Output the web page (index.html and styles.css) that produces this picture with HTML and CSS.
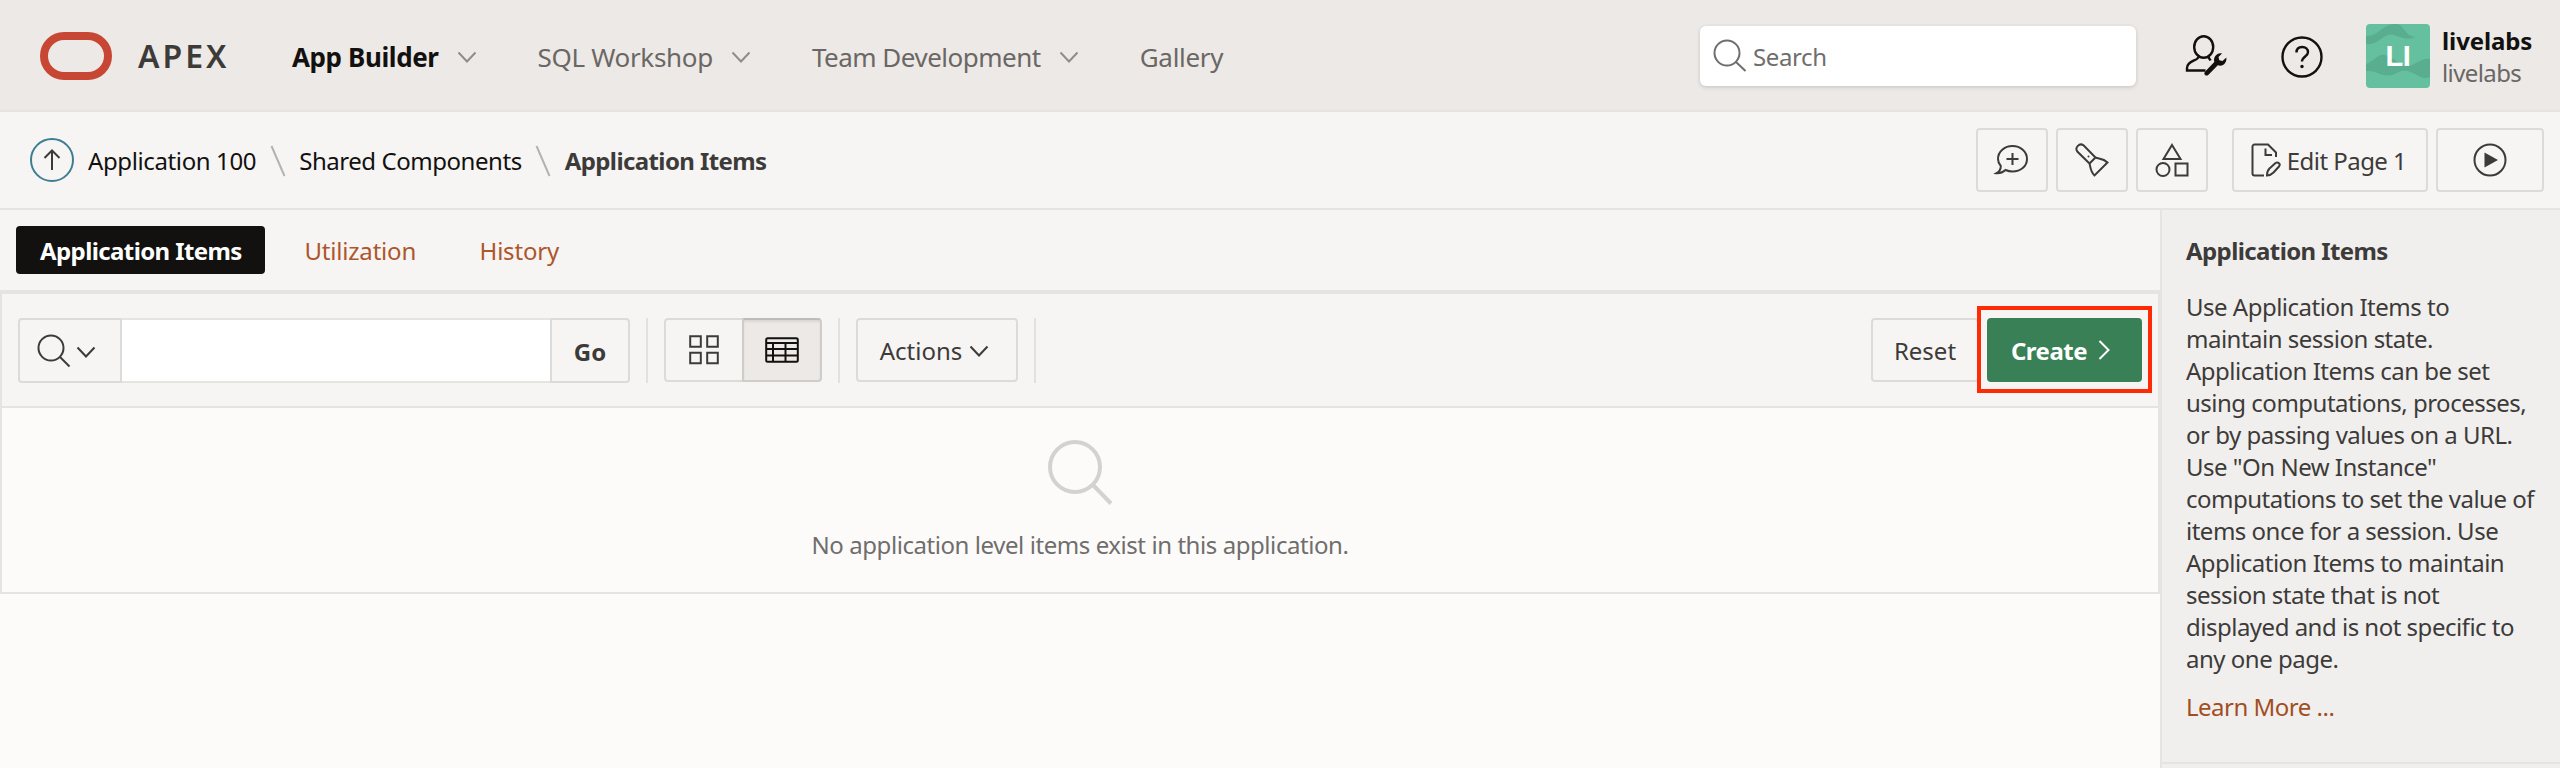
FILE: index.html
```html
<!DOCTYPE html>
<html lang="en">
<head>
<meta charset="utf-8">
<title>Application Items</title>
<link rel="stylesheet" href="styles.css">
</head>
<body>
<header class="header">
  <div class="logo"></div>
  <span class="brand">APEX</span>
  <nav class="nav">
    <a class="nav-item nav-item--active"><span class="t nav-bold">App Builder</span><svg class="chev" viewBox="0 0 20 12"><path d="M1.500 1.500 10 10.500 18.500 1.500"/></svg></a>
    <a class="nav-item"><span class="t nav-sql">SQL Workshop</span><svg class="chev" viewBox="0 0 20 12"><path d="M1.500 1.500 10 10.500 18.500 1.500"/></svg></a>
    <a class="nav-item"><span class="t nav-team">Team Development</span><svg class="chev" viewBox="0 0 20 12"><path d="M1.500 1.500 10 10.500 18.500 1.500"/></svg></a>
    <a class="nav-item"><span class="t nav-gal">Gallery</span></a>
  </nav>
  <div class="search">
    <svg class="search-icon" viewBox="0 0 34 34"><circle cx="14" cy="14" r="12.500"/><path d="M23 23 32.500 32"/></svg>
    <span class="t search-text">Search</span>
  </div>
  <svg class="admin-icon" viewBox="0 0 44 44"><ellipse cx="19.700" cy="13" rx="9.500" ry="10.800"/><path d="M14.300 22.500c.8 4.500-11.300 3.500-11.300 11.500v2.500h18.500M24.500 22.500c0 2 1.500 2.500 2 4"/><path class="solid" d="M38 19.500 34.500 23l.8 3.200 3.200.8 3.800-3.500c.8 4-2 8.200-6 8.200-1 0-1.800-.2-2.500-.5L24.500 40.700c-2.400 2.400-5.700-.7-3.300-3.200L30.300 28c-1.300-4.500 2.500-9.600 7.700-8.500z"/></svg>
  <svg class="help-icon" viewBox="0 0 42 42"><circle cx="21" cy="21" r="19.500"/><path d="M15.500 16.500c0-3.500 2.300-5.500 5.700-5.500s5.800 2 5.800 5.200c0 4.300-6 4.300-6 9.300"/><circle class="solid" cx="21" cy="30.500" r="1.700"/></svg>
  <div class="avatar">
    <svg class="avatar-bg" viewBox="0 0 64 64"><path d="M0 12C12 13 17-1 30 0c9 1 8 12 20 13-10 4-15 0-22-2C17 8 14 22 0 20zM0 40c8-3 12-11 19-9 12 3 15 14 27 10 8-4 12-7 18-6v18c-7 3-11-1-17-4-9-4-11-3-18 1-12 5-17-4-29-3z"/></svg>
    <span class="avatar-text">LI</span>
  </div>
  <div class="user"><span class="user-name">livelabs</span><span class="user-ws">livelabs</span></div>
</header>

<div class="crumbs">
  <a class="up"><svg class="up-icon" viewBox="0 0 18 22"><path d="M9 21V2M1.500 9 9 1.500 16.500 9"/></svg></a>
  <a class="t crumb-app">Application 100</a>
  <svg class="slash" viewBox="0 0 16 32"><path d="M1.500 1 14.500 31"/></svg>
  <a class="t crumb-shared">Shared Components</a>
  <svg class="slash" viewBox="0 0 16 32"><path d="M1.500 1 14.500 31"/></svg>
  <span class="t title-bold crumb-here">Application Items</span>
  <div class="tools">
    <button class="btn tool"><svg class="ico34" viewBox="0 0 34 34"><path d="M17.500 3C25.500 3 32 8.500 32 16S25.500 28.500 17.500 28.500c-2.500 0-5-.6-7-1.500-2.500 2.300-5 3.500-9 3.200 3-1.700 4.300-4.200 4.300-7.200C4 21 3 18.700 3 16 3 8.500 9.500 3 17.500 3zM17.500 10v12M11.500 16h12"/></svg></button>
    <button class="btn tool"><svg class="ico34" viewBox="0 0 34 34"><path d="M14.500 20.500 2.300 8.500C-.5 4.500 4.500-.5 8.500 2.300L20.500 14.500zM20.500 14.500C24 16 28 15 32.500 19.500L19.500 32.500C15.500 29 15.500 24 14.500 20.500"/><circle class="solid" cx="13.500" cy="13.500" r="1"/></svg></button>
    <button class="btn tool"><svg class="ico34" viewBox="0 0 34 34"><path d="M17 2 25.500 16H8.500zM20.500 20.500h12v12h-12z"/><circle cx="8" cy="26.500" r="6.500"/></svg></button>
    <button class="btn edit"><svg class="ico34" viewBox="0 0 34 34"><path d="M14 32.500H4.500a2 2 0 0 1-2-2V3.500a2 2 0 0 1 2-2H18L26 9.500V14M15.500 5.500v6.500h6.500M17 32.500c0-3 .5-5 2.500-7l6-5.500c2.500-1.500 5.500 1 3.500 3.500l-5.500 6c-2 2-4 3-6.500 3z"/></svg><span class="t edit-text">Edit Page 1</span></button>
    <button class="btn run"><svg class="ico34" viewBox="0 0 34 34"><circle cx="17" cy="17" r="15.500"/><path class="solid" d="M11.500 9.500 25 17 11.500 24.500z"/></svg></button>
  </div>
</div>

<div class="body">
  <main class="main">
    <div class="tabs">
      <a class="tab tab--active title-bold">Application Items</a>
      <a class="tab tab-util">Utilization</a>
      <a class="tab tab-hist">History</a>
    </div>
    <section class="report">
      <div class="toolbar">
        <div class="find">
          <button class="find-col"><svg class="find-icon" viewBox="0 0 34 34"><circle cx="14" cy="14" r="12.500"/><path d="M23 23 32.500 32.500"/></svg><svg class="chev" viewBox="0 0 20 12"><path d="M1.500 1.500 10 10.500 18.500 1.500"/></svg></button>
          <input class="find-input" type="text">
          <button class="find-go"><span class="t">Go</span></button>
        </div>
        <i class="sep"></i>
        <div class="views">
          <button class="btn view"><svg class="grid-icon" viewBox="0 0 30 30"><path d="M1.200 1.200h10.600v10.600H1.200zM18.200 1.200h10.600v10.600H18.200zM1.200 17.700h10.600v10.600H1.200zM18.200 17.700h10.600v10.600H18.200z"/></svg></button>
          <button class="btn view view--on"><svg class="table-icon" viewBox="0 0 34 26"><rect x="1.200" y="1.200" width="31.600" height="23.600" rx="1.500"/><path d="M1 6h32M1 12h32M1 18.500h32M8 6v19M20.500 6v19"/></svg></button>
        </div>
        <i class="sep"></i>
        <button class="btn actions"><span class="t">Actions</span><svg class="chev" viewBox="0 0 20 12"><path d="M1.500 1.500 10 10.500 18.500 1.500"/></svg></button>
        <i class="sep"></i>
        <button class="btn reset"><span class="t">Reset</span></button>
        <div class="highlight"><button class="create"><span class="t create-text">Create</span><svg class="chev-right" viewBox="0 0 12 20"><path d="M1.500 1 10.500 10 1.500 19"/></svg></button></div>
      </div>
      <div class="empty">
        <svg class="empty-icon" viewBox="0 0 68 68"><circle cx="29" cy="27" r="25"/><path d="M47 45 65 63.500"/></svg>
        <p class="empty-text">No application level items exist in this application.</p>
      </div>
    </section>
  </main>
  <aside class="side">
    <div class="help">
      <h2 class="help-title title-bold">Application Items</h2>
      <p class="help-text">Use Application Items to<br>maintain session state.<br>Application Items can be set<br>using computations, processes,<br>or by passing values on a URL.<br>Use "On New Instance"<br>computations to set the value of<br>items once for a session. Use<br>Application Items to maintain<br>session state that is not<br>displayed and is not specific to<br>any one page.</p>
      <a class="learn">Learn More ...</a>
    </div>
  </aside>
</div>
</body>
</html>
```
FILE: styles.css
```css
* { box-sizing: border-box; margin: 0; padding: 0; }
body { width: 2560px; height: 768px; overflow: hidden; background: #fcfbfa; color: #3d3b39; font: 24px/32px "Noto Sans", sans-serif; display: flex; flex-direction: column; }
svg { flex: none; fill: none; stroke: currentColor; stroke-width: 2; overflow: visible; }
.solid { fill: currentColor; stroke: none; }
.t { white-space: nowrap; padding-top: 2px; }
button { font: inherit; color: inherit; background: none; border: 0; }
.title-bold { font-weight: 700; letter-spacing: -0.6px; white-space: nowrap; }
.chev { width: 20px; height: 12px; margin-top: 2px; }

.header { flex: none; height: 112px; padding: 2px 0 0 40px; display: flex; align-items: center; background: #ede9e6; border-bottom: 2px solid #e6e3e1; }
.logo { flex: none; width: 72px; height: 48px; border: 8px solid #c74634; border-radius: 24px; }
.brand { margin-left: 26px; width: 154px; font-size: 32px; font-weight: 600; letter-spacing: 3px; }
.nav { display: flex; gap: 61px; font-size: 26px; color: #6a6764; }
.nav-item { display: flex; align-items: center; gap: 18px; }
.nav-item--active { color: #12110f; font-weight: 700; }
.nav-bold { letter-spacing: -0.4px; }
.nav-sql { letter-spacing: -0.32px; }
.nav-team { letter-spacing: -0.5px; }
.nav-gal { letter-spacing: -0.3px; }
.nav .chev { color: #8f8c8a; }
.search { margin-left: auto; width: 436px; height: 60px; padding-left: 13px; display: flex; align-items: center; gap: 6px; background: #fff; border-radius: 6px; box-shadow: 0 0 0 2px rgba(0, 0, 0, .02), 0 2px 4px rgba(0, 0, 0, .1); color: #6f6e6c; }
.search-icon { width: 34px; height: 34px; }
.search-text { letter-spacing: -0.4px; }
.admin-icon { width: 44px; height: 44px; margin-left: 48px; margin-right: 1px; color: #12110f; stroke-width: 2.4; }
.help-icon { width: 42px; height: 42px; margin-left: 52px; margin-top: 1px; color: #12110f; stroke-width: 2.4; }
.avatar { position: relative; flex: none; width: 64px; height: 64px; margin-left: 43px; border-radius: 4px; overflow: hidden; background: #65c09f; color: #fff; display: flex; align-items: center; justify-content: center; font: 700 29px/32px "Liberation Sans", sans-serif; }
.avatar-bg { position: absolute; inset: 0; fill: #5aae90; stroke: none; }
.avatar-text { position: relative; letter-spacing: -0.5px; }
.user { width: 118px; margin-left: 12px; padding-top: 2px; display: flex; flex-direction: column; }
.user-name { color: #12110f; font-weight: 700; letter-spacing: -0.1px; }
.user-ws { color: #6a6764; letter-spacing: -0.6px; }

.crumbs { flex: none; height: 98px; padding: 0 16px 0 30px; display: flex; align-items: center; background: #f6f5f3; border-bottom: 2px solid #e6e4e1; color: #12110f; }
.up { width: 44px; height: 44px; margin-right: 14px; border: 2px solid #3d7e92; border-radius: 50%; display: flex; align-items: center; justify-content: center; color: #3d3b39; }
.up-icon { width: 18px; height: 22px; }
.crumb-app { letter-spacing: -0.38px; }
.crumb-shared { letter-spacing: -0.45px; }
.crumb-here { color: #3d3b39; }
.slash { width: 16px; height: 32px; margin: 2px 13.5px 0; color: #b5b3b1; }
.tools { margin-left: auto; display: flex; gap: 8px; color: #3d3b39; }
.btn { height: 64px; border: 2px solid #dddbd9; border-radius: 4px; display: flex; align-items: center; justify-content: center; }
.tool { width: 72px; }
.ico34 { width: 34px; height: 34px; }
.edit { width: 196px; margin-left: 16px; padding-right: 4px; gap: 3px; }
.edit-text { letter-spacing: -0.55px; }
.run { width: 108px; }

.body { flex: 1; display: flex; min-height: 0; }
.main { width: 2160px; }
.tabs { height: 84px; padding: 0 16px; display: flex; align-items: center; gap: 15.5px; background: #f6f5f3; border-bottom: 4px solid #e6e4e1; color: #ae562c; }
.tab { height: 48px; padding: 9px 24px 0; }
.tab--active { width: 249px; background: #12110f; color: #fff; border-radius: 4px; }
.tab-util { letter-spacing: -0.2px; }
.tab-hist { letter-spacing: -0.2px; }
.report { height: 300px; border: 2px solid #e6e4e1; border-top: 0; }
.toolbar { height: 114px; padding: 24px 6px 0 16px; display: flex; align-items: flex-start; background: #f6f5f3; border-bottom: 2px solid #e6e4e1; }
.find { display: flex; width: 612px; height: 65px; }
.find-col { width: 104px; padding-left: 17px; border: 2px solid #dddbd9; border-radius: 4px 0 0 4px; display: flex; align-items: center; gap: 5px; }
.find-icon { width: 34px; height: 34px; }
.find-input { flex: 1; min-width: 0; border: solid #e6e4e1; border-width: 2px 0; background: #fff; }
.find-go { width: 80px; border: 2px solid #dddbd9; border-radius: 0 4px 4px 0; font-weight: 700; display: flex; align-items: center; justify-content: center; }
.sep { width: 2px; height: 65px; margin: 0 16px; background: #e3e1df; }
.views { display: flex; }
.view { width: 78px; border-radius: 4px 0 0 4px; border-right: 0; }
.view--on { width: 80px; border: 2px solid #cfccc9; border-radius: 0 4px 4px 0; background: #ede9e6; color: #12110f; border-top-color: #bebbb8; box-shadow: inset 0 2px 2px rgba(0, 0, 0, .08); }
.grid-icon { width: 30px; height: 30px; }
.table-icon { width: 34px; height: 26px; }
.actions { width: 162px; padding-right: 5px; gap: 7px; }
.reset { width: 108px; margin-left: auto; margin-right: -2px; }
.highlight { width: 175px; height: 87px; margin-top: -12px; padding-top: 8px; border: 4px solid #ff2a06; display: flex; align-items: flex-start; justify-content: center; }
.create { width: 155px; height: 64px; padding-right: 8px; border-radius: 4px; background: #3a8056; color: #fff; font-weight: 700; display: flex; align-items: center; justify-content: center; gap: 11px; }
.create-text { letter-spacing: -0.5px; }
.chev-right { width: 12px; height: 20px; }
.empty { padding-top: 32px; display: flex; flex-direction: column; align-items: center; gap: 21px; color: #6f6e6c; }
.empty-icon { width: 68px; height: 68px; color: #d2d2d1; stroke-width: 4; }
.empty-text { letter-spacing: -0.43px; }

.side { width: 400px; background: #f0efed; border-left: 2px solid #e6e4e1; }
.help { height: 554px; padding: 25px 24px 0; border-bottom: 2px solid #e6e4e1; }
.help-title { font-size: 24px; line-height: 32px; margin-bottom: 24px; }
.help-text { white-space: nowrap; margin-bottom: 16px; letter-spacing: -0.5px; }
.learn { color: #a04e24; letter-spacing: -0.5px; }
```
